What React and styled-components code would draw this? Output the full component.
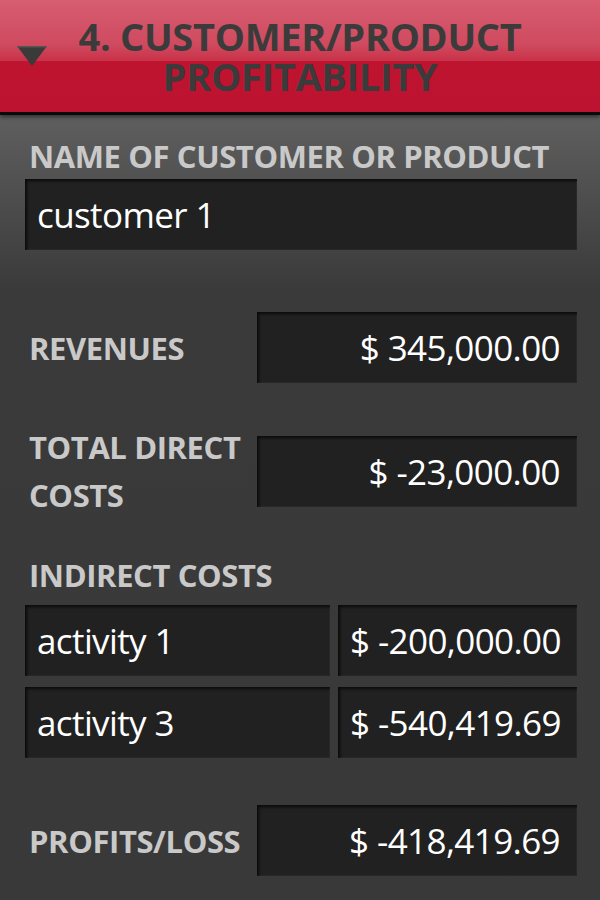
import React from "react";
import styled, { createGlobalStyle } from "styled-components";

const GlobalStyle = createGlobalStyle`
  html, body {
    margin: 0;
    padding: 0;
    background: #393939;
  }
  body {
    font-family: "Open Sans", "Noto Sans", sans-serif;
  }
`;

const Screen = styled.div`
  width: 600px;
  min-height: 900px;
  background: linear-gradient(to bottom, #5f5f5f 115px, #3a3a3a 290px, #393939 100%);
  overflow: hidden;
`;

const Header = styled.header`
  height: 112px;
  display: grid;
  grid-template-columns: 60px 1fr 60px;
  align-items: center;
  background: linear-gradient(
    to bottom,
    #d75d71 0%,
    #cf4a5f 40%,
    #c93249 54%,
    #be1430 55%,
    #bd1330 100%
  );
  border-bottom: 3px solid #0a0a0a;
  box-shadow: 0 2px 4px rgba(0, 0, 0, 0.5);
`;

const Toggle = styled.svg`
  margin-left: 17px;
  margin-top: 0;
`;

const Title = styled.h1`
  margin: 0;
  text-align: center;
  font-size: 38px;
  line-height: 40px;
  font-weight: 700;
  color: #3b3b3b;
  letter-spacing: -0.3px;
`;

const Body = styled.main`
  display: flex;
  flex-direction: column;
  padding: 0 23px 0 25px;
`;

const Label = styled.div`
  padding-left: 4px;
  font-size: 31px;
  line-height: ${(p) => (p.$multi ? "48px" : "40px")};
  font-weight: 700;
  color: #c9c9c9;
  letter-spacing: -0.4px;
  margin-top: ${(p) => p.$top || 0}px;
`;

const Field = styled.div`
  box-sizing: border-box;
  height: 71px;
  display: flex;
  align-items: center;
  justify-content: ${(p) => (p.$right ? "flex-end" : "flex-start")};
  padding: 0 ${(p) => (p.$right ? "17px" : "10px")} 0 12px;
  background: #212121;
  box-shadow: inset 2px 2px 3px rgba(0, 0, 0, 0.7), inset -1px -1px 0 rgba(255, 255, 255, 0.04);
  color: #ffffff;
  font-size: 35px;
  font-weight: 400;
  letter-spacing: -0.6px;
  white-space: nowrap;
  margin-top: ${(p) => p.$top || 0}px;
`;

const Row = styled.div`
  display: grid;
  grid-template-columns: 232px 1fr;
  align-items: center;
  margin-top: ${(p) => p.$top || 0}px;
`;

const Pair = styled.div`
  display: grid;
  grid-template-columns: 305px 1fr;
  gap: 8px;
  margin-top: ${(p) => p.$top || 0}px;
`;

export default function App() {
  return (
    <>
      <GlobalStyle />
      <Screen>
        <Header>
          <Toggle width="30" height="21" viewBox="0 0 30 21">
            <polygon points="0,0 30,0 15,20" fill="#3a3a3a" />
            <polygon points="0,0 30,0 29,1.5 1,1.5" fill="#555" />
          </Toggle>
          <Title>
            4. CUSTOMER/PRODUCT
            <br />
            PROFITABILITY
          </Title>
          <span />
        </Header>
        <Body>
          <Label $top={21}>NAME OF CUSTOMER OR PRODUCT</Label>
          <Field $top={3}>customer 1</Field>

          <Row $top={62}>
            <Label>REVENUES</Label>
            <Field $right>$ 345,000.00</Field>
          </Row>

          <Row $top={40}>
            <Label $multi>
              TOTAL DIRECT
              <br />
              COSTS
            </Label>
            <Field $right>$ -23,000.00</Field>
          </Row>

          <Label $top={36}>INDIRECT COSTS</Label>
          <Pair $top={10}>
            <Field>activity 1</Field>
            <Field>$ -200,000.00</Field>
          </Pair>
          <Pair $top={11}>
            <Field>activity 3</Field>
            <Field>$ -540,419.69</Field>
          </Pair>

          <Row $top={47}>
            <Label>PROFITS/LOSS</Label>
            <Field $right>$ -418,419.69</Field>
          </Row>
        </Body>
      </Screen>
    </>
  );
}
